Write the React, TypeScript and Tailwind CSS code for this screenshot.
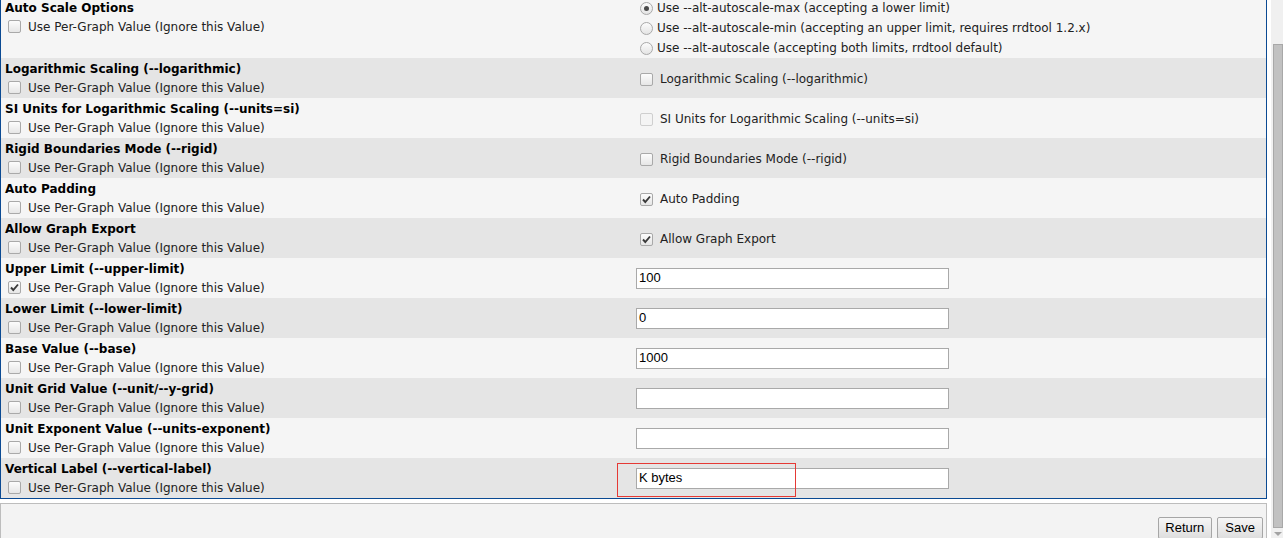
import React from 'react';

type Field = {
  title: string;
  perGraph: boolean;
  kind: 'check' | 'text' | 'radios';
  label?: string;
  checked?: boolean;
  disabled?: boolean;
  value?: string;
  marked?: boolean;
};

const RADIOS = [
  'Use --alt-autoscale-max (accepting a lower limit)',
  'Use --alt-autoscale-min (accepting an upper limit, requires rrdtool 1.2.x)',
  'Use --alt-autoscale (accepting both limits, rrdtool default)',
];

const FIELDS: Field[] = [
  { title: 'Logarithmic Scaling (--logarithmic)', perGraph: false, kind: 'check', label: 'Logarithmic Scaling (--logarithmic)' },
  { title: 'SI Units for Logarithmic Scaling (--units=si)', perGraph: false, kind: 'check', label: 'SI Units for Logarithmic Scaling (--units=si)', disabled: true },
  { title: 'Rigid Boundaries Mode (--rigid)', perGraph: false, kind: 'check', label: 'Rigid Boundaries Mode (--rigid)' },
  { title: 'Auto Padding', perGraph: false, kind: 'check', label: 'Auto Padding', checked: true },
  { title: 'Allow Graph Export', perGraph: false, kind: 'check', label: 'Allow Graph Export', checked: true },
  { title: 'Upper Limit (--upper-limit)', perGraph: true, kind: 'text', value: '100' },
  { title: 'Lower Limit (--lower-limit)', perGraph: false, kind: 'text', value: '0' },
  { title: 'Base Value (--base)', perGraph: false, kind: 'text', value: '1000' },
  { title: 'Unit Grid Value (--unit/--y-grid)', perGraph: false, kind: 'text', value: '' },
  { title: 'Unit Exponent Value (--units-exponent)', perGraph: false, kind: 'text', value: '' },
  { title: 'Vertical Label (--vertical-label)', perGraph: false, kind: 'text', value: 'K bytes', marked: true },
];

function Box({ checked, disabled }: { checked?: boolean; disabled?: boolean }) {
  return (
    <span
      className={`relative inline-block h-[13px] w-[13px] shrink-0 rounded-[2px] border ${
        disabled ? 'border-[#cfcfcf] bg-[#f4f4f4]' : 'border-[#a9a9a9] bg-gradient-to-b from-[#fcfcfc] to-[#e6e6e6]'
      }`}
    >
      {checked && (
        <svg viewBox="0 0 13 13" className="absolute left-[-1px] top-[-1px] h-[13px] w-[13px]">
          <path d="M3 6.5 L5.3 9 L10 3.5" fill="none" stroke="#3a3a3a" strokeWidth="1.9" />
        </svg>
      )}
    </span>
  );
}

function Radio({ checked }: { checked?: boolean }) {
  return (
    <span className="flex h-[13px] w-[13px] shrink-0 items-center justify-center rounded-full border border-[#a9a9a9] bg-gradient-to-b from-[#fcfcfc] to-[#e4e4e4]">
      {checked && <span className="h-[5px] w-[5px] rounded-full bg-[#4a4a4a]" />}
    </span>
  );
}

function PerGraph({ checked }: { checked?: boolean }) {
  return (
    <div className="flex h-[19px] items-center pl-[3px]">
      <Box checked={checked} />
      <span className="ml-[7px] text-[#222]">Use Per-Graph Value (Ignore this Value)</span>
    </div>
  );
}

function Row({ f, dark }: { f: Field; dark: boolean }) {
  return (
    <div className={`grid h-[40px] grid-cols-[632px_1fr] ${dark ? 'bg-[#e5e5e5]' : 'bg-[#f5f5f5]'}`}>
      <div className="pt-[2px] pl-[4px]">
        <div className="h-[18px] font-bold leading-[18px] text-black">{f.title}</div>
        <PerGraph checked={f.perGraph} />
      </div>
      <div className="flex items-center pl-[3px]">
        {f.kind === 'check' ? (
          <div className="flex items-center pl-[4px] pt-[2px]">
            <Box checked={f.checked} disabled={f.disabled} />
            <span className="ml-[7px] text-[#222]">{f.label}</span>
          </div>
        ) : (
          <div className="relative">
            <div className="flex h-[21px] w-[313px] items-center border border-[#a9a9a9] bg-white pl-[2px] font-['Liberation_Sans',Arial,sans-serif] text-[13px] text-black">
              {f.value}
            </div>
            {f.marked && (
              <div className="pointer-events-none absolute left-[-19px] top-[-5px] h-[34px] w-[179px] border border-[#e53935]" />
            )}
          </div>
        )}
      </div>
    </div>
  );
}

export default function App() {
  return (
    <div className="flex h-[538px] w-[1283px] overflow-hidden bg-white font-['DejaVu_Sans',Verdana,sans-serif] text-[12px]">
      <div className="w-[1271px] shrink-0">
        <div className="mt-[-3px] w-[1267px] border-x border-b border-[#0b4a93]">
          <div className="grid h-[61px] grid-cols-[632px_1fr] bg-[#f5f5f5]">
            <div className="pt-[2px] pl-[4px]">
              <div className="h-[18px] font-bold leading-[18px] text-black">Auto Scale Options</div>
              <PerGraph />
            </div>
            <div className="pl-[7px] pt-[1px]">
              {RADIOS.map((r, i) => (
                <div key={r} className="flex h-[20px] items-center">
                  <Radio checked={i === 0} />
                  <span className="ml-[4px] text-[#222]">{r}</span>
                </div>
              ))}
            </div>
          </div>
          {FIELDS.map((f, i) => (
            <Row key={f.title} f={f} dark={i % 2 === 0} />
          ))}
        </div>
        <div className="mt-[4px] h-[40px] w-[1267px] border-l border-t border-r border-[#bdbdbd] bg-[#f3f3f3]">
          <div className="flex justify-end gap-[5px] pt-[13px] pr-[3px] font-['Liberation_Sans',Arial,sans-serif] text-[13px]">
            <button className="h-[22px] rounded-[2px] border border-[#a6a6a6] bg-gradient-to-b from-[#f6f6f6] to-[#dedede] pl-[6px] pr-[7px] text-black">
              Return
            </button>
            <button className="h-[22px] rounded-[2px] border border-[#a6a6a6] bg-gradient-to-b from-[#f6f6f6] to-[#dedede] px-[7px] text-black">
              Save
            </button>
          </div>
        </div>
      </div>
      <div className="relative w-[12px] shrink-0 bg-[#f0f0f0]">
        <div className="absolute left-[2px] right-0 top-[44px] bottom-[10px] border border-[#a8a8a8] bg-[#c1c1c1]" />
        <div className="absolute bottom-[2px] left-[3px] h-0 w-0 border-x-[4px] border-t-[4px] border-x-transparent border-t-[#a3a3a3]" />
      </div>
    </div>
  );
}
